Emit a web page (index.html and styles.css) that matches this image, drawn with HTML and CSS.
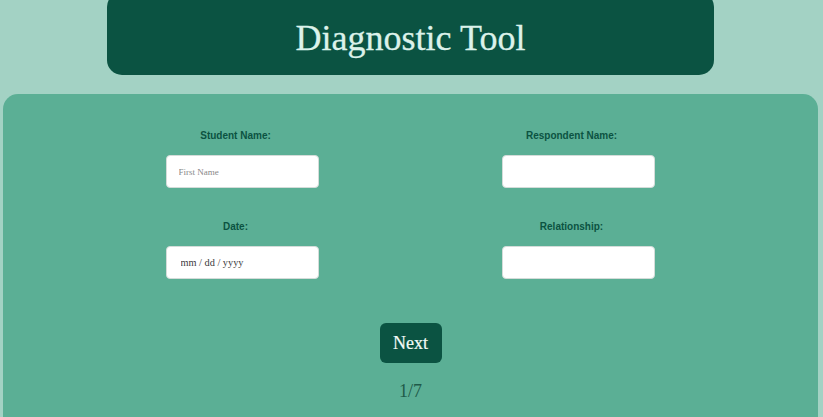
FILE: index.html
```html
<!DOCTYPE html>
<html lang="en">
<head>
<meta charset="utf-8">
<title>Diagnostic Tool</title>
<link rel="stylesheet" href="styles.css">
</head>
<body>
<header class="header">
  <h1 class="title">Diagnostic Tool</h1>
</header>
<main class="panel">
  <form class="form">
    <div class="field">
      <label class="label" for="student">Student Name:</label>
      <input class="input" id="student" type="text" placeholder="First Name">
    </div>
    <div class="field">
      <label class="label" for="respondent">Respondent Name:</label>
      <input class="input" id="respondent" type="text">
    </div>
    <div class="field">
      <label class="label" for="date">Date:</label>
      <input class="input date" id="date" type="text" placeholder="mm / dd / yyyy">
    </div>
    <div class="field">
      <label class="label" for="relationship">Relationship:</label>
      <input class="input" id="relationship" type="text">
    </div>
  </form>
  <div class="actions">
    <button class="next" type="button">Next</button>
    <div class="progress">1/7</div>
  </div>
</main>
</body>
</html>
```
FILE: styles.css
```css
html, body {
  margin: 0;
  padding: 0;
}
body {
  background: #a3d2c4;
  font-family: "Liberation Serif", serif;
  overflow: hidden;
  height: 417px;
}
.header {
  width: 607px;
  margin: -8px 0 0 107px;
  height: 83px;
  background: #0b5342;
  border-radius: 15px;
  display: flex;
  align-items: center;
  justify-content: center;
  padding-top: 8px;
  box-sizing: border-box;
}
.title {
  margin: 0;
  font-family: "Liberation Serif", serif;
  font-weight: normal;
  font-size: 36px;
  color: #dcf2ea;
  line-height: 1;
  -webkit-text-stroke: 0.3px #dcf2ea;
}
.panel {
  margin: 19px 5px 0 3px;
  background: #5baf95;
  border-radius: 15px;
  height: 340px;
  padding-top: 29px;
  box-sizing: border-box;
}
.form {
  display: grid;
  grid-template-columns: 300px 300px;
  column-gap: 36px;
  row-gap: 26px;
  justify-content: center;
  padding-right: 2px;
}
.field {
  display: flex;
  flex-direction: column;
  align-items: center;
}
.label {
  font-family: "Liberation Sans", Arial, sans-serif;
  font-weight: bold;
  font-size: 10px;
  color: #0b5342;
  line-height: 12px;
  margin-top: 7px;
  margin-right: 12px;
  margin-bottom: 13px;
}
.input {
  width: 153px;
  height: 33px;
  box-sizing: border-box;
  border: 1px solid #d4dcd9;
  border-radius: 4px;
  background: #fff;
  padding: 0 12px;
  margin-left: 1px;
  font-family: "Liberation Serif", serif;
  font-size: 9px;
  color: #333;
  outline: none;
}
.input::placeholder {
  color: #888;
}
.date {
  font-size: 10.3px;
  padding-left: 14px;
}
.date::placeholder {
  color: #3a3a3a;
}
.actions {
  display: flex;
  flex-direction: column;
  align-items: center;
  margin-top: 44px;
}
.next {
  width: 62px;
  height: 40px;
  background: #0b5342;
  color: #f3faf7;
  border: none;
  border-radius: 6px;
  font-family: "Liberation Serif", serif;
  font-size: 18px;
  padding: 0;
  -webkit-text-stroke: 0.2px #f3faf7;
}
.progress {
  margin-top: 17px;
  font-size: 18px;
  color: #1f5a49;
  line-height: 22px;
}
```
